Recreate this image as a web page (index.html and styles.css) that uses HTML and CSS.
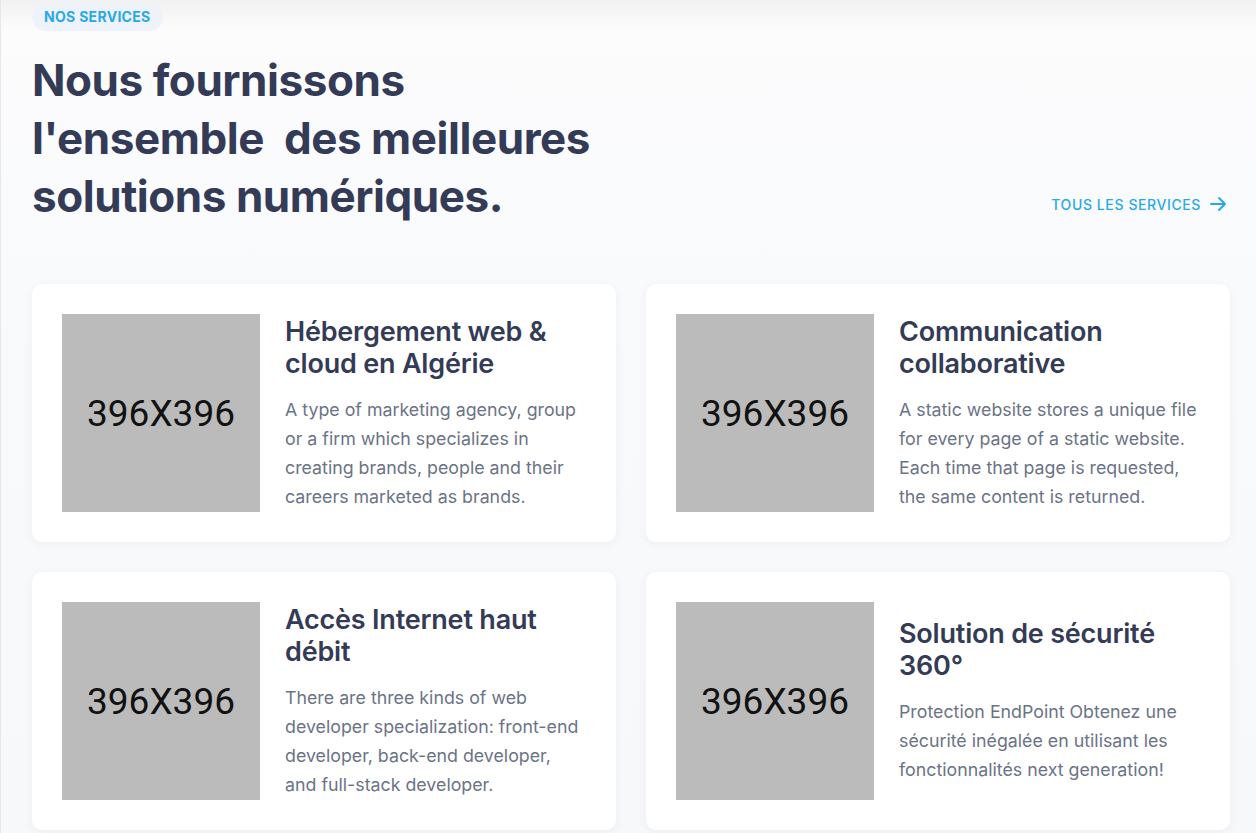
FILE: index.html
```html
<!DOCTYPE html>
<html lang="fr">
  <head>
    <meta charset="UTF-8" />
    <meta name="viewport" content="width=device-width, initial-scale=1.0" />
    <title>Nos services</title>
    <link rel="stylesheet" href="styles.css">
  </head>
  <body>
    <section class="services">
      <span class="badge">NOS SERVICES</span>
      <div class="head">
        <h2 class="title">Nous fournissons<br />l'ensemble&nbsp; des meilleures<br />solutions numériques.</h2>
        <a class="more" href="#">TOUS LES SERVICES
          <svg width="18" height="18" viewBox="0 0 18 18" fill="none" stroke="currentColor" stroke-width="2" stroke-linecap="round" stroke-linejoin="round"><path d="M2 9h14M10 3l6 6-6 6" /></svg>
        </a>
      </div>
      <div class="grid">
        <div class="card">
          <div class="thumb">396X396</div>
          <div class="body">
            <h3>Hébergement web &amp; cloud en Algérie</h3>
            <p>A type of marketing agency, group or a firm which specializes in creating brands, people and their careers marketed as brands.</p>
          </div>
        </div>
        <div class="card">
          <div class="thumb">396X396</div>
          <div class="body">
            <h3>Communication collaborative</h3>
            <p>A static website stores a unique file for every page of a static website. Each time that page is requested, the same content is returned.</p>
          </div>
        </div>
        <div class="card">
          <div class="thumb">396X396</div>
          <div class="body">
            <h3>Accès Internet haut débit</h3>
            <p>There are three kinds of web developer specialization: front-end developer, back-end developer, and full-stack developer.</p>
          </div>
        </div>
        <div class="card">
          <div class="thumb">396X396</div>
          <div class="body">
            <h3>Solution de sécurité 360°</h3>
            <p>Protection EndPoint Obtenez une sécurité inégalée en utilisant les fonctionnalités next generation!</p>
          </div>
        </div>
      </div>
    </section>
  </body>
</html>
```

FILE: styles.css
```css
body {
  margin: 0;
  font-family: Inter, "Noto Sans", sans-serif;
  background-color: #ffffff;
}
.services {
  min-height: 833px;
  box-sizing: border-box;
  padding: 3px 29px 0 31px;
  border-left: 1px solid #e6e7ea;
  background: linear-gradient(to bottom, #f1f1f2 0, #fcfcfd 30px, #f9fafc 260px, #f7f8fa 100%);
}
.badge {
  display: inline-block;
  padding: 0 12px;
  height: 28px;
  line-height: 28px;
  border-radius: 14px;
  background-color: #edf2fb;
  color: #28a9e6;
  font-size: 14px;
  font-weight: 700;
  letter-spacing: 0.3px;
}
.head {
  display: flex;
  justify-content: space-between;
  align-items: flex-end;
  margin-top: 20px;
}
.title {
  margin: 0;
  color: #343b57;
  font-size: 44px;
  font-weight: 700;
  line-height: 58px;
  letter-spacing: -0.45px;
}
.more {
  display: flex;
  align-items: center;
  gap: 8px;
  margin-bottom: 12px;
  color: #28a9e6;
  font-size: 14px;
  font-weight: 500;
  letter-spacing: 0.6px;
  text-decoration: none;
}
.grid {
  display: grid;
  grid-template-columns: 584px 584px;
  gap: 30px;
  margin-top: 59px;
}
.card {
  display: flex;
  align-items: center;
  gap: 25px;
  padding: 30px;
  background-color: #ffffff;
  border-radius: 10px;
  box-shadow: 0 2px 10px rgba(30, 40, 70, 0.05);
}
.thumb {
  flex: none;
  width: 198px;
  height: 198px;
  display: flex;
  align-items: center;
  justify-content: center;
  background-color: #bbbbbb;
  color: #111111;
  font-family: Roboto, sans-serif;
  font-size: 37px;
}
.body h3 {
  margin: 0 0 15px;
  color: #343b57;
  font-size: 27px;
  font-weight: 600;
  line-height: 32px;
  letter-spacing: -0.2px;
}
.body p {
  margin: 0;
  color: #6b7386;
  font-size: 17.8px;
  line-height: 29px;
}
```
